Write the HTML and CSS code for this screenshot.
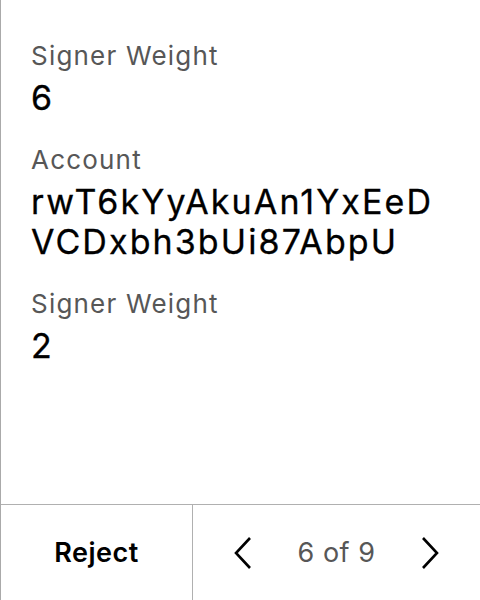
FILE: index.html
```html
<!DOCTYPE html>
<html>
<head>
<meta charset="utf-8">
<link rel="stylesheet" href="styles.css">
</head>
<body>
<div class="screen">
  <div class="content">
    <div class="field">
      <div class="label">Signer Weight</div>
      <div class="value">6</div>
    </div>
    <div class="field">
      <div class="label">Account</div>
      <div class="value">rwT6kYyAkuAn1YxEeD<br>VCDxbh3bUi87AbpU</div>
    </div>
    <div class="field">
      <div class="label">Signer Weight</div>
      <div class="value">2</div>
    </div>
  </div>
  <div class="footer">
    <div class="reject">Reject</div>
    <div class="pager">
      <svg class="chev" width="20" height="34" viewBox="0 0 20 34"><path d="M17 2 L3 17 L17 32" fill="none" stroke="#000" stroke-width="2.6"/></svg>
      <span class="count">6 of 9</span>
      <svg class="chev" width="20" height="34" viewBox="0 0 20 34"><path d="M3 2 L17 17 L3 32" fill="none" stroke="#000" stroke-width="2.6"/></svg>
    </div>
  </div>
</div>
</body>
</html>
```

FILE: styles.css
```css
html, body {
  margin: 0;
  padding: 0;
  background: #fff;
}
body {
  font-family: Inter, "Noto Sans", sans-serif;
  width: 480px;
  height: 600px;
  overflow: hidden;
}
.screen {
  width: 480px;
  height: 600px;
  box-sizing: border-box;
  border-left: 1px solid #aaaaaa;
  display: flex;
  flex-direction: column;
}
.content {
  flex: 1;
  padding: 40px 0 0 30px;
  display: flex;
  flex-direction: column;
  gap: 26px;
}
.label {
  font-size: 26px;
  line-height: 32px;
  letter-spacing: 1.2px;
  color: #575757;
}
.value {
  font-size: 34px;
  line-height: 40px;
  letter-spacing: 2.1px;
  color: #000;
  margin-top: 6px;
  -webkit-text-stroke: 0.3px #000;
}
.footer {
  height: 95px;
  border-top: 1px solid #b0b0b0;
  display: flex;
}
.reject {
  width: 191px;
  border-right: 1px solid #b0b0b0;
  display: flex;
  align-items: center;
  justify-content: center;
  font-weight: 600;
  font-size: 27px;
  letter-spacing: 0.5px;
  color: #000;
}
.pager {
  flex: 1;
  display: flex;
  align-items: center;
  justify-content: space-between;
  padding: 0 40px 0 40px;
}
.count {
  font-size: 27px;
  letter-spacing: 0.5px;
  color: #575757;
}
```
